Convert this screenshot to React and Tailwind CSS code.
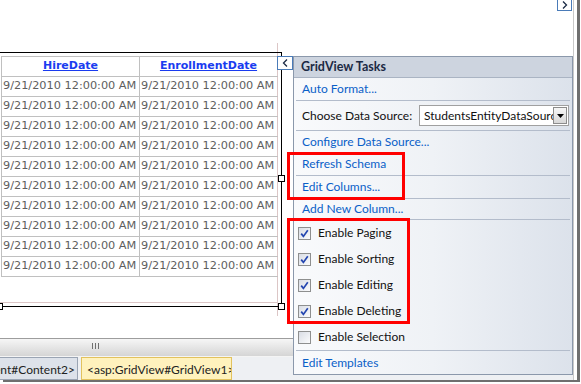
const stamp = '9/21/2010 12:00:00 AM'
const dataRows = Array.from({ length: 10 })

function Check({ checked }) {
  return (
    <span className="w-[13px] h-[13px] border border-[#8e8f8f] bg-gradient-to-br from-[#d9dde5] to-[#fbfbfc] flex items-center justify-center shrink-0">
      {checked && (
        <svg width="9" height="9" viewBox="0 0 9 9">
          <path d="M1.2 4.6 L3.4 7.4 L7.8 1.2" fill="none" stroke="#2446b0" strokeWidth="1.7" />
        </svg>
      )}
    </span>
  )
}

function Sep() {
  return <div className="h-px mx-[2px] bg-[#b3bccb]" />
}

function LinkRow({ label, h = 'h-[22px]' }) {
  return (
    <div className={`${h} flex items-center pl-[8px] text-[#0a60c8]`}>{label}</div>
  )
}

function CheckRow({ label, checked }) {
  return (
    <div className="h-[26px] flex items-center pl-[4px] gap-[7px] text-[#111]">
      <Check checked={checked} />
      <span>{label}</span>
    </div>
  )
}

export default function App() {
  return (
    <div className="w-[581px] h-[384px] bg-white overflow-hidden relative font-['Lato',sans-serif] text-[12px]">
      <div className="flex h-[380px]">
        {/* design surface */}
        <div className="w-[574px] flex flex-col border-r border-[#c9c9c9]">
          <div className="h-[347px] relative">
            {/* selection guides */}
            <div className="absolute left-[277px] top-[43px] w-px h-[273px] bg-[#dcc6c6]" />
            <div className="absolute left-0 top-[302px] w-[277px] h-px bg-[#dcc6c6]" />

            <div className="mt-[52px] w-[282px] h-[255px] border-t border-r border-b border-black relative">
              <div className="mt-[3px] ml-[1px] w-[277px] border-l border-t border-[#c0c0c0] font-['DejaVu_Sans',sans-serif] text-[11.3px]">
                <div className="flex h-[20px] border-b border-[#c0c0c0] text-[11px]">
                  <div className="w-[138px] border-r border-[#c0c0c0] flex items-center justify-center font-bold text-[#1a3cf0] underline">
                    HireDate
                  </div>
                  <div className="w-[138px] border-r border-[#dcc6c6] flex items-center justify-center font-bold text-[#1a3cf0] underline">
                    EnrollmentDate
                  </div>
                </div>
                {dataRows.map((_, i) => (
                  <div key={i} className="flex h-[20px] border-b border-[#c0c0c0] text-[#5e5e5e]">
                    <div className="w-[138px] border-r border-[#c0c0c0] flex items-center pl-[1px] whitespace-nowrap overflow-hidden">
                      {stamp}
                    </div>
                    <div className="w-[138px] border-r border-[#dcc6c6] flex items-center pl-[1px] whitespace-nowrap overflow-hidden">
                      {stamp}
                    </div>
                  </div>
                ))}
              </div>

              {/* grab handles */}
              <div className="absolute left-[278px] top-[122px] w-[7px] h-[7px] border border-black bg-white" />
              <div className="absolute left-[278px] top-[250px] w-[7px] h-[7px] border border-black bg-white" />
              <div className="absolute left-[-4px] top-[250px] w-[7px] h-[7px] border border-black bg-white" />
            </div>
          </div>

          {/* horizontal scrollbar */}
          <div className="h-[19px] border-t border-[#9d9d9d] bg-gradient-to-b from-[#f6f6f6] to-[#d5d5d5] border-b border-b-[#f4f4f4]">
            <div className="ml-[92px] mt-[4px] flex gap-[2px]">
              <span className="w-px h-[6px] bg-[#707070]" />
              <span className="w-px h-[6px] bg-[#707070]" />
              <span className="w-px h-[6px] bg-[#707070]" />
            </div>
          </div>

          {/* tag tabs */}
          <div className="flex-1 flex bg-[#eef0f3] gap-[3px]">
            <div className="w-[78px] bg-[#dde2ea] border border-l-0 border-[#9aa4b3] flex justify-end overflow-hidden pt-[3px] pr-[2px] whitespace-nowrap text-[#222]">
              &lt;asp:Content#Content2&gt;
            </div>
            <div className="w-[151px] bg-[#fff2bd] border border-[#e2c25e] pl-[5px] pt-[3px] overflow-hidden whitespace-nowrap text-[#222]">
              &lt;asp:GridView#GridView1&gt;
            </div>
          </div>
        </div>
        <div className="w-[3px]" />
        <div className="w-[3px] bg-[#6f6f6f]" />
      </div>
      <div className="h-[2px] ml-[3px] w-[577px] bg-[#6f6f6f]" />

      {/* top-right smart tag */}
      <div className="absolute left-[557px] top-[-1px] w-[15px] h-[12px] border border-[#4a7bb8] bg-white flex items-center justify-center">
        <svg width="6" height="8" viewBox="0 0 6 8">
          <path d="M1 0.5 L4.5 4 L1 7.5" fill="none" stroke="#1b2a45" strokeWidth="1.3" />
        </svg>
      </div>

      {/* smart tag toggle */}
      <div className="absolute left-[277px] top-[56px] w-[16px] h-[14px] border border-[#4a7bb8] bg-white flex items-center justify-center">
        <svg width="6" height="8" viewBox="0 0 6 8">
          <path d="M5 0.5 L1.5 4 L5 7.5" fill="none" stroke="#1b2a45" strokeWidth="1.3" />
        </svg>
      </div>

      {/* GridView Tasks panel */}
      <div className="absolute left-[293px] top-[56px] w-[280px] h-[319px] border border-[#8b98ab] bg-gradient-to-r from-[#f9fafc] via-[#eff2f6] to-[#dce2eb] flex flex-col">
        <div className="h-[21px] bg-[#cdd4df] border-b border-[#aab4c3] flex items-center pl-[7px] font-bold text-[#1b2944] text-[12.5px]">
          GridView Tasks
        </div>
        <LinkRow label="Auto Format..." />
        <Sep />
        <div className="h-[29px] flex items-center justify-between pl-[8px] pr-[3px] text-[#111]">
          <span>Choose Data Source:</span>
          <div className="w-[150px] h-[21px] border border-[#a0a0a0] bg-white flex items-center">
            <span className="flex-1 pl-[4px] overflow-hidden whitespace-nowrap">StudentsEntityDataSource</span>
            <span className="w-[14px] h-[17px] mr-[1px] border border-[#8c8c8c] bg-gradient-to-b from-[#f6f6f6] to-[#d8d8d8] flex items-center justify-center shrink-0">
              <svg width="7" height="4" viewBox="0 0 7 4">
                <path d="M0 0 L7 0 L3.5 4 Z" fill="#000" />
              </svg>
            </span>
          </div>
        </div>
        <Sep />
        <LinkRow label="Configure Data Source..." />
        <LinkRow label="Refresh Schema" />
        <Sep />
        <LinkRow label="Edit Columns..." />
        <Sep />
        <LinkRow label="Add New Column..." h="h-[20px]" />
        <Sep />
        <CheckRow label="Enable Paging" checked />
        <CheckRow label="Enable Sorting" checked />
        <CheckRow label="Enable Editing" checked />
        <CheckRow label="Enable Deleting" checked />
        <CheckRow label="Enable Selection" />
        <Sep />
        <LinkRow label="Edit Templates" h="h-[23px]" />
      </div>

      {/* annotation boxes */}
      <div className="absolute left-[287px] top-[152px] w-[118px] h-[48px] border-[3px] border-[#ff0000]" />
      <div className="absolute left-[287px] top-[218px] w-[123px] h-[106px] border-[3px] border-[#ff0000]" />
    </div>
  )
}
